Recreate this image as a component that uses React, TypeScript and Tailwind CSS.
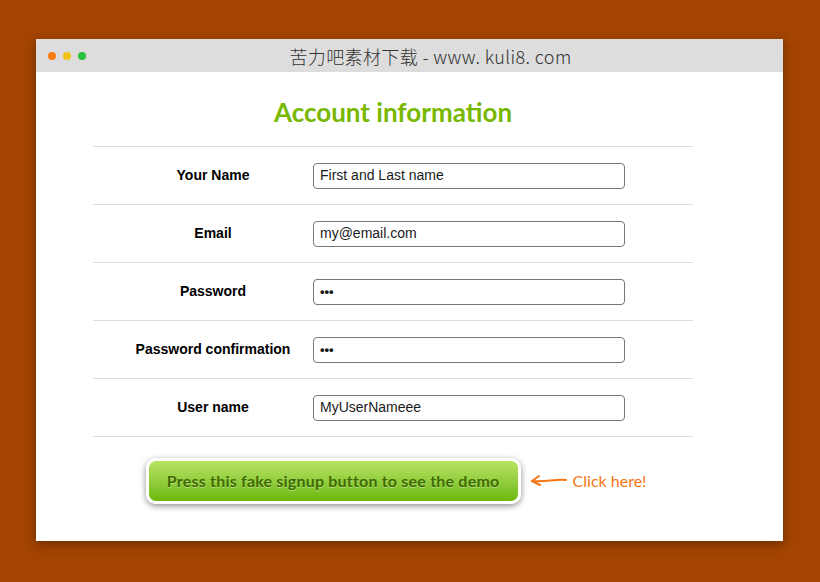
import React from "react";

const fields = [
  { label: "Your Name", value: "First and Last name" },
  { label: "Email", value: "my@email.com" },
  { label: "Password", value: "•••", secret: true },
  { label: "Password confirmation", value: "•••", secret: true },
  { label: "User name", value: "MyUserNameee" },
];

const App = () => {
  return (
    <div className="w-[820px] h-[582px] bg-[#a34400] pt-[39px] pl-[36px] overflow-hidden">
      <div className="w-[747px] h-[502px] bg-white shadow-[0_3px_10px_rgba(0,0,0,0.35)] flex flex-col">
        {/* Title bar */}
        <div className="h-[33px] bg-[#dddddd] flex items-center shrink-0">
          <div className="flex items-center gap-[7px] pl-[12px]">
            <span className="w-[8px] h-[8px] rounded-full bg-[#f57b10]" />
            <span className="w-[8px] h-[8px] rounded-full bg-[#f0c419]" />
            <span className="w-[8px] h-[8px] rounded-full bg-[#2cc13d]" />
          </div>
          <div className="flex-1 text-center pr-[8px] text-[18px] tracking-[0.4px] font-light text-[#333] font-['Noto_Sans_CJK_SC',sans-serif] leading-none">
            苦力吧素材下载 - www. kuli8. com
          </div>
        </div>

        {/* Content */}
        <div className="w-[600px] ml-[57px] pt-[24px]">
          <h1 className="text-center text-[26px] leading-[32px] font-bold text-[#78b800] font-['Lato',sans-serif] mb-[18px]">
            Account information
          </h1>

          <div className="border-b border-[#dddddd]">
            {fields.map((f, i) => (
              <div key={i} className="h-[58px] border-t border-[#dddddd] flex items-center">
                <div className="w-[220px] pl-[20px] text-center text-[14px] font-bold text-black font-['Liberation_Sans',Arial,sans-serif]">
                  {f.label}
                </div>
                <div className="w-[312px] h-[26px] border border-[#777] rounded-[4px] flex items-center pl-[6px] font-['Liberation_Sans',Arial,sans-serif] text-[#1a1a1a]">
                  {f.secret ? (
                    <span className="text-[13px] font-bold">{f.value}</span>
                  ) : (
                    <span className="text-[14px]">{f.value}</span>
                  )}
                </div>
              </div>
            ))}
          </div>

          {/* Button row */}
          <div className="flex items-center justify-center mt-[21px] pl-[6px]">
            <div className="w-[375px] h-[46px] rounded-[10px] border-[3px] border-white shadow-[0_2px_6px_rgba(0,0,0,0.45)] bg-gradient-to-b from-[#b8e462] to-[#6cb800] flex items-center justify-center">
              <span className="text-[16px] tracking-[0.2px] font-bold text-[#3e6b00] font-['Lato',sans-serif] [text-shadow:0_1px_0_rgba(255,255,255,0.35)]">
                Press this fake signup button to see the demo
              </span>
            </div>
            <svg width="40" height="14" viewBox="0 0 40 14" className="ml-[8px]">
              <path d="M37 6 C 27 5, 16 8, 3 7" fill="none" stroke="#f57514" strokeWidth="2" strokeLinecap="round" />
              <path d="M10 2 L3 7 L11 11" fill="none" stroke="#f57514" strokeWidth="2" strokeLinecap="round" strokeLinejoin="round" />
            </svg>
            <span className="ml-[4px] text-[16px] text-[#f57514] font-['Lato',sans-serif]">Click here!</span>
          </div>
        </div>
      </div>
    </div>
  );
};

export default App;
